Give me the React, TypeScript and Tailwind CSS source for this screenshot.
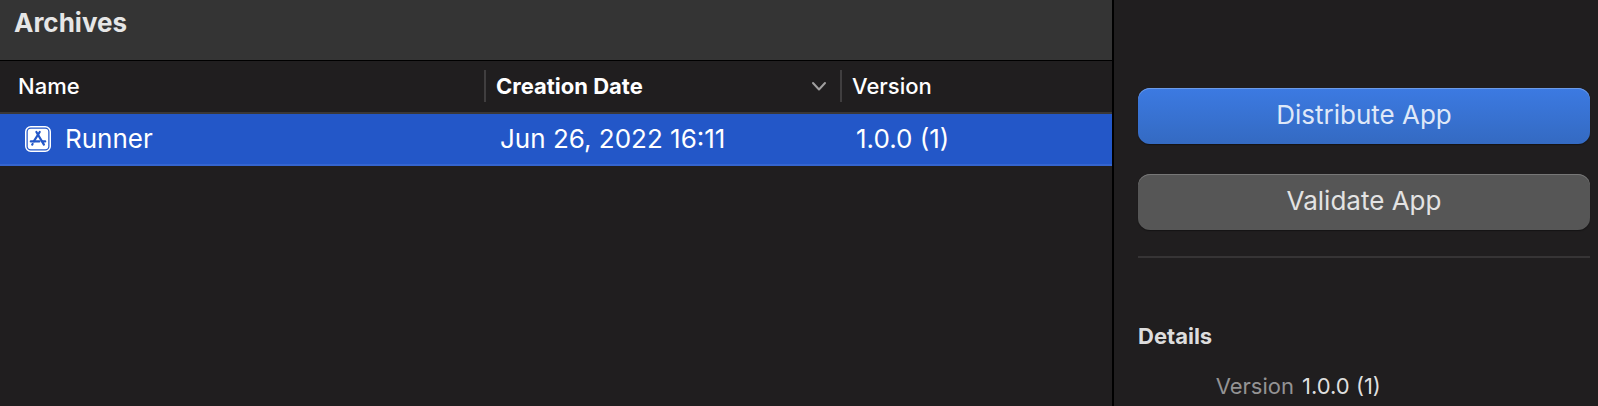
import type { ReactNode } from "react";

type Archive = { name: string; created: string; version: string };

const archives: Archive[] = [
  { name: "Runner", created: "Jun 26, 2022 16:11", version: "1.0.0 (1)" },
];

function AppIcon() {
  return (
    <svg className="size-[26px] shrink-0" viewBox="0 0 26 26" fill="none" aria-hidden="true">
      <rect x="0.75" y="0.75" width="24.5" height="24.5" rx="5" stroke="#fff" strokeWidth="1.5" />
      <rect x="2.75" y="2.75" width="20.5" height="20.5" rx="3" fill="#fff" />
      <g stroke="#2357c8" strokeWidth="2.2" strokeLinecap="round">
        <path d="M14.7 6 8.8 15.4" />
        <path d="M11.4 6 18.9 18.6" />
        <path d="M5.8 15.4H14.4" />
        <path d="M17.4 15.4H20.2" />
        <path d="M7.6 18 7.2 18.6" />
      </g>
    </svg>
  );
}

function HeaderCell({ children, divided = false }: { children: ReactNode; divided?: boolean }) {
  return (
    <th scope="col" className="border-b-2 border-[#3a3838] p-0 text-left font-medium">
      <div
        className={
          divided
            ? "mt-[9px] mb-[10px] flex h-8 items-center border-r-2 border-[#403e3f]"
            : "mt-[9px] mb-[10px] flex h-8 items-center"
        }
      >
        {children}
      </div>
    </th>
  );
}

function ArchiveTable() {
  return (
    <table className="w-full table-fixed border-separate border-spacing-0 text-white">
      <colgroup>
        <col className="w-[486px]" />
        <col className="w-[356px]" />
        <col />
      </colgroup>
      <thead className="text-[22px] leading-8">
        <tr>
          <HeaderCell divided>
            <span className="pl-[18px]">Name</span>
          </HeaderCell>
          <HeaderCell divided>
            <button type="button" className="flex w-full items-center justify-between pr-3 pl-2.5 font-bold">
              Creation Date
              <svg className="h-4 w-[18px]" viewBox="0 0 18 16" fill="none" aria-hidden="true">
                <path
                  d="M3 5 9 11.5 15 5"
                  stroke="#a09f9f"
                  strokeWidth="2"
                  strokeLinecap="round"
                  strokeLinejoin="round"
                />
              </svg>
            </button>
          </HeaderCell>
          <HeaderCell>
            <span className="pl-2.5">Version</span>
          </HeaderCell>
        </tr>
      </thead>
      <tbody className="text-[26px] leading-[50px]">
        {archives.map((archive) => (
          <tr key={archive.name} className="bg-[#2357c8]">
            <td className="border-b-2 border-[#3565cf] p-0">
              <div className="flex items-center gap-3.5 pl-[25px]">
                <AppIcon />
                {archive.name}
              </div>
            </td>
            <td className="border-b-2 border-[#3565cf] p-0 pl-3.5">{archive.created}</td>
            <td className="border-b-2 border-[#3565cf] p-0 pl-3.5">{archive.version}</td>
          </tr>
        ))}
      </tbody>
    </table>
  );
}

export default function App() {
  return (
    <div className="flex min-h-screen bg-[#201e1f] font-['Inter','Liberation_Sans',sans-serif]">
      <main className="min-w-0 flex-1">
        <header className="border-b border-black bg-[#343434] px-3.5 pt-[7px] pb-[21px]">
          <h1 className="text-[26px] leading-8 font-bold text-[#e6e6e6]">Archives</h1>
        </header>
        <ArchiveTable />
      </main>
      <aside className="w-[486px] shrink-0 border-l-2 border-black pt-[88px] pr-2 pl-6">
        <div className="flex flex-col gap-[30px] text-[26px] leading-[54px]">
          <button
            type="button"
            className="h-14 rounded-xl bg-linear-to-b from-[#3c7ae2] to-[#346ac2] pb-0.5 text-[#dfe8f8] shadow-[inset_0_1px_0_#6c9be8,0_1px_1px_#141314]"
          >
            Distribute App
          </button>
          <button
            type="button"
            className="h-14 rounded-xl bg-[#565656] pb-0.5 text-[#e3e3e3] shadow-[inset_0_1px_0_#777777,0_1px_1px_#141314]"
          >
            Validate App
          </button>
        </div>
        <hr className="mt-[26px] border-t-2 border-[#363435]" />
        <section className="pt-[62px] text-[22px] leading-8">
          <h2 className="font-bold text-[#dddddd]">Details</h2>
          <dl className="mt-[18px] flex gap-2">
            <dt className="w-[156px] text-right text-[#949394]">Version</dt>
            <dd className="text-[#dfdfdf]">1.0.0 (1)</dd>
          </dl>
        </section>
      </aside>
    </div>
  );
}
